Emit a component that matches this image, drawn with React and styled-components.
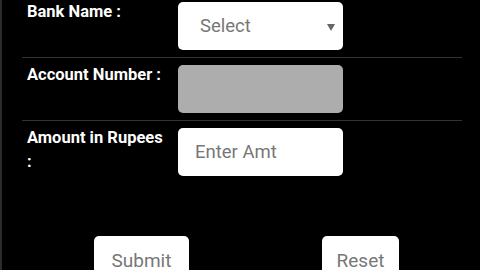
import React from "react";
import styled, { createGlobalStyle } from "styled-components";

const GlobalStyle = createGlobalStyle`
	html, body {
		margin: 0;
		padding: 0;
		background: #000;
		overflow: hidden;
	}
	body {
		font-family: Roboto, "Noto Sans", sans-serif;
	}
`;

const Screen = styled.div`
	width: 480px;
	height: 270px;
	box-sizing: border-box;
	border-left: 2px solid #2b2b2b;
	background: #000;
	overflow: hidden;
`;

const Form = styled.form`
	margin: -5px 0 0 20px;
	width: 440px;
`;

const Row = styled.div`
	display: grid;
	grid-template-columns: 151px 165px;
	align-items: start;
	padding: 7px 0 7px 5px;
	border-bottom: ${p => (p.last ? "none" : "1px solid #333")};
`;

const Label = styled.label`
	color: #fff;
	font-size: 16.5px;
	font-weight: 700;
	line-height: 24px;
	margin-top: -2px;
	padding-right: 11px;
`;

const Field = styled.div`
	position: relative;
	box-sizing: border-box;
	height: 48px;
	border-radius: 5px;
	background: ${p => (p.disabled ? "#adadad" : "#fff")};
	display: flex;
	align-items: center;
	padding-left: ${p => (p.select ? "22px" : "17px")};
	color: #777;
	font-size: 18.5px;
`;

const Arrow = styled.svg`
	position: absolute;
	right: 8px;
	top: 22px;
`;

const Buttons = styled.div`
	display: grid;
	grid-template-columns: 219px 219px;
	justify-items: center;
	margin: 53px 0 0 10px;
`;

const Button = styled.button`
	box-sizing: border-box;
	height: 48px;
	padding: 0 ${p => p.pad}px;
	border: none;
	border-radius: 5px;
	background: #fff;
	color: #777;
	font-family: Roboto, sans-serif;
	font-size: 19px;
`;

const App = () => (
	<Screen>
		<GlobalStyle />
		<Form>
			<Row>
				<Label>Bank Name :</Label>
				<Field select>
					Select
					<Arrow width="8" height="7" viewBox="0 0 8 7">
						<path d="M0 0 L8 0 L4 7 Z" fill="#666" />
					</Arrow>
				</Field>
			</Row>
			<Row>
				<Label>Account Number :</Label>
				<Field disabled />
			</Row>
			<Row last>
				<Label>Amount in Rupees :</Label>
				<Field>Enter Amt</Field>
			</Row>
			<Buttons>
				<Button type="button" pad={18}>Submit</Button>
				<Button type="button" pad={15}>Reset</Button>
			</Buttons>
		</Form>
	</Screen>
);

export default App;
